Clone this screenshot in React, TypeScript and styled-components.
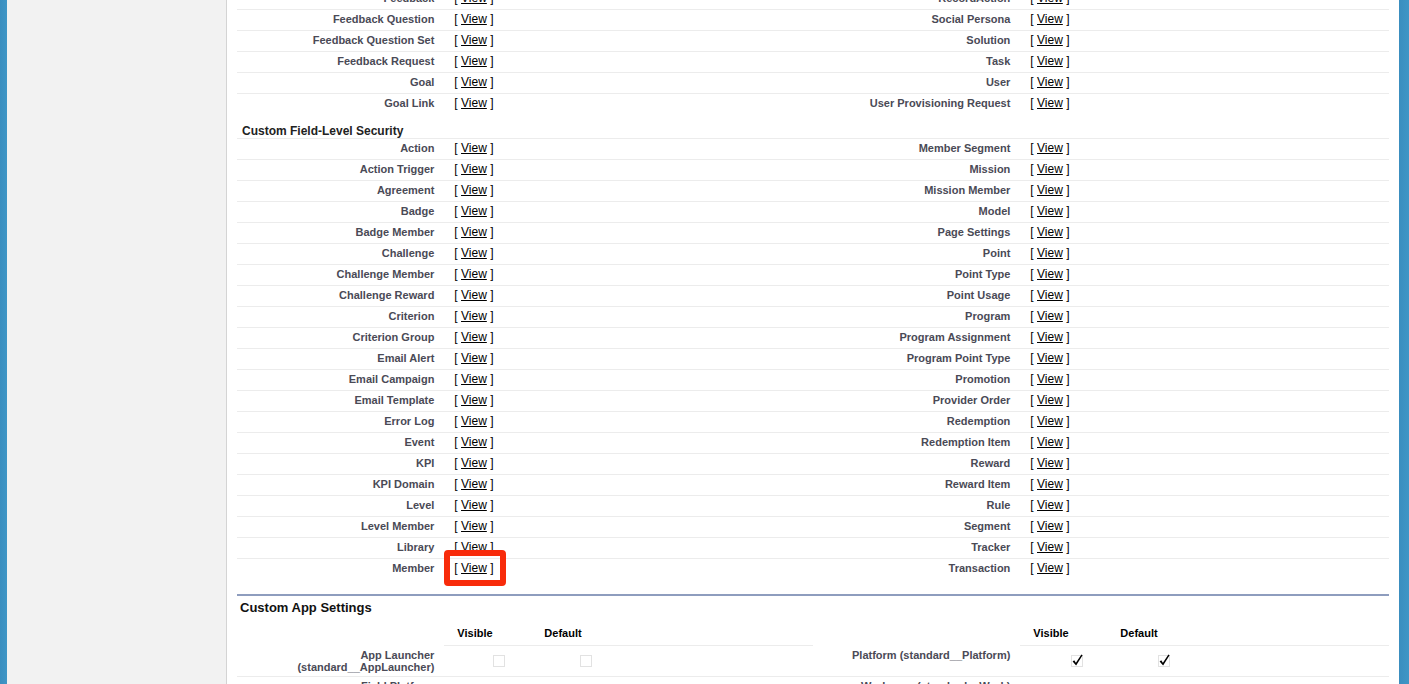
import React from 'react';
import styled, { createGlobalStyle, css } from 'styled-components';

const GlobalStyle = createGlobalStyle`
  html, body {
    margin: 0;
    padding: 0;
    height: 100%;
    overflow: hidden;
  }
  body {
    font-family: "Liberation Sans", Arial, Helvetica, sans-serif;
    background: #fff;
  }
`;

const Page = styled.div`
  display: flex;
  height: 684px;
  overflow: hidden;
`;

const Edge = styled.div<{ $w: number }>`
  flex: 0 0 ${p => p.$w}px;
  background: linear-gradient(to right, #3a8ebf, #3f96c6);
`;

const Sidebar = styled.div`
  flex: 0 0 219px;
  background: #f2f2f2;
`;

const Panel = styled.div`
  flex: 1;
  min-width: 0;
  background: #fff;
  border-left: 1px solid #d4d4d4;
  padding: 0 10px;
  overflow: hidden;
`;

// page is scrolled a little, first row sits partly above the fold
const Scrolled = styled.div`
  margin-top: -11px;
`;

const Row = styled.div`
  display: grid;
  grid-template-columns: 18% 32% 18% 32%;
  border-bottom: 1px solid #ececec;
  &:last-child {
    border-bottom: none;
  }
`;

const Label = styled.div`
  height: 20px;
  line-height: 18px;
  padding: 0 10px 0 2px;
  text-align: right;
  font-size: 11px;
  font-weight: bold;
  color: #4a4a56;
  white-space: nowrap;
`;

const Data = styled.div`
  height: 20px;
  box-sizing: border-box;
  display: flex;
  align-items: center;
  padding: 0 10px 2px;
  font-size: 12px;
  color: #000;
`;

const ViewWrap = styled.span<{ $marked?: boolean }>`
  position: relative;
  display: inline-block;
  line-height: 14px;
  a {
    color: #000;
    text-decoration: underline;
  }
  ${p => p.$marked && css`
    &::after {
      content: '';
      position: absolute;
      left: -10px;
      right: -12px;
      top: -11px;
      bottom: -11px;
      border: 6px solid #f82b0b;
      border-radius: 4px;
    }
  `}
`;

const SectionTitle = styled.h3`
  margin: 0;
  padding: 10px 5px 0;
  font-size: 12px;
  line-height: 14px;
  font-weight: bold;
  color: #222;
  border-bottom: 1px solid #ececec;
`;

const AppSection = styled.div`
  margin-top: 15px;
  border-top: 2px solid #8e9dbe;
`;

const AppTitle = styled.h3`
  margin: 0;
  padding: 4px 3px 5px;
  font-size: 13px;
  line-height: 16px;
  font-weight: bold;
  color: #111;
`;

const AppRow = styled.div<{ $head?: boolean }>`
  display: grid;
  grid-template-columns: 18% 32% 18% 32%;
  ${p => !p.$head && css`border-bottom: 1px solid #ececec;`}
`;

const AppLabel = styled.div`
  padding: 3px 10px 3px 2px;
  line-height: 12px;
  min-height: 24px;
  text-align: right;
  font-size: 11px;
  font-weight: bold;
  color: #4a4a56;
`;

const AppData = styled.div<{ $head?: boolean }>`
  display: grid;
  grid-template-columns: 87px 87px;
  align-items: start;
  ${p => p.$head && css`
    height: 24px;
    border-bottom: 1px solid #ececec;
  `}
`;

const ColHead = styled.div`
  padding: 5px 0 0 13px;
  line-height: 14px;
  font-size: 11px;
  font-weight: bold;
  color: #000;
`;

const BoxCell = styled.div<{ $shift?: number }>`
  padding: 9px 0 0 ${p => 49 + (p.$shift ?? 0)}px;
  line-height: 0;
`;

const CheckBox: React.FC<{ checked?: boolean }> = ({ checked }) => (
  <svg width="12" height="12" viewBox="0 0 12 12" style={{ overflow: 'visible' }}>
    <rect x="0.5" y="0.5" width="11" height="11" fill="none" stroke="#c4c4c4" strokeDasharray="1 1" />
    {checked && (
      <path d="M1.6 6.4 L3.2 5.3 L4.9 7.7 L10.4 -0.6 L11.6 0.3 L5.1 10.6 Z" fill="#000" />
    )}
  </svg>
);

const View: React.FC<{ marked?: boolean }> = ({ marked }) => (
  <ViewWrap $marked={marked}>
    [ <a href="#">View</a> ]
  </ViewWrap>
);

const standardRows: [string, string][] = [
  ['Feedback', 'RecordAction'],
  ['Feedback Question', 'Social Persona'],
  ['Feedback Question Set', 'Solution'],
  ['Feedback Request', 'Task'],
  ['Goal', 'User'],
  ['Goal Link', 'User Provisioning Request'],
];

const customLeft = [
  'Action', 'Action Trigger', 'Agreement', 'Badge', 'Badge Member', 'Challenge',
  'Challenge Member', 'Challenge Reward', 'Criterion', 'Criterion Group', 'Email Alert',
  'Email Campaign', 'Email Template', 'Error Log', 'Event', 'KPI', 'KPI Domain', 'Level',
  'Level Member', 'Library', 'Member',
];

const customRight = [
  'Member Segment', 'Mission', 'Mission Member', 'Model', 'Page Settings', 'Point',
  'Point Type', 'Point Usage', 'Program', 'Program Assignment', 'Program Point Type',
  'Promotion', 'Provider Order', 'Redemption', 'Redemption Item', 'Reward', 'Reward Item',
  'Rule', 'Segment', 'Tracker', 'Transaction',
];

const apps = [
  { left: 'App Launcher (standard__AppLauncher)', leftOn: false, right: 'Platform (standard__Platform)', rightOn: true },
  { left: 'Field Platform', leftOn: false, right: 'Work.com (standard__Work)', rightOn: false },
];

const App: React.FC = () => {
  return (
    <>
      <GlobalStyle />
      <Page>
        <Edge $w={7} />
        <Sidebar />
        <Panel>
          <Scrolled>
            <div>
              {standardRows.map(([l, r]) => (
                <Row key={l}>
                  <Label>{l}</Label>
                  <Data><View /></Data>
                  <Label>{r}</Label>
                  <Data><View /></Data>
                </Row>
              ))}
            </div>

            <SectionTitle>Custom Field-Level Security</SectionTitle>
            <div>
              {customLeft.map((l, i) => (
                <Row key={l}>
                  <Label>{l}</Label>
                  <Data><View marked={l === 'Member'} /></Data>
                  <Label>{customRight[i]}</Label>
                  <Data><View /></Data>
                </Row>
              ))}
            </div>

            <AppSection>
              <AppTitle>Custom App Settings</AppTitle>
              <AppRow $head>
                <div />
                <AppData $head>
                  <ColHead>Visible</ColHead>
                  <ColHead>Default</ColHead>
                </AppData>
                <div />
                <AppData $head>
                  <ColHead>Visible</ColHead>
                  <ColHead>Default</ColHead>
                </AppData>
              </AppRow>
              {apps.map(a => (
                <AppRow key={a.left}>
                  <AppLabel>{a.left}</AppLabel>
                  <AppData>
                    <BoxCell><CheckBox checked={a.leftOn} /></BoxCell>
                    <BoxCell><CheckBox checked={a.leftOn} /></BoxCell>
                  </AppData>
                  <AppLabel>{a.right}</AppLabel>
                  <AppData>
                    <BoxCell $shift={2}><CheckBox checked={a.rightOn} /></BoxCell>
                    <BoxCell $shift={2}><CheckBox checked={a.rightOn} /></BoxCell>
                  </AppData>
                </AppRow>
              ))}
            </AppSection>
          </Scrolled>
        </Panel>
        <Edge $w={10} />
      </Page>
    </>
  );
};

export default App;
